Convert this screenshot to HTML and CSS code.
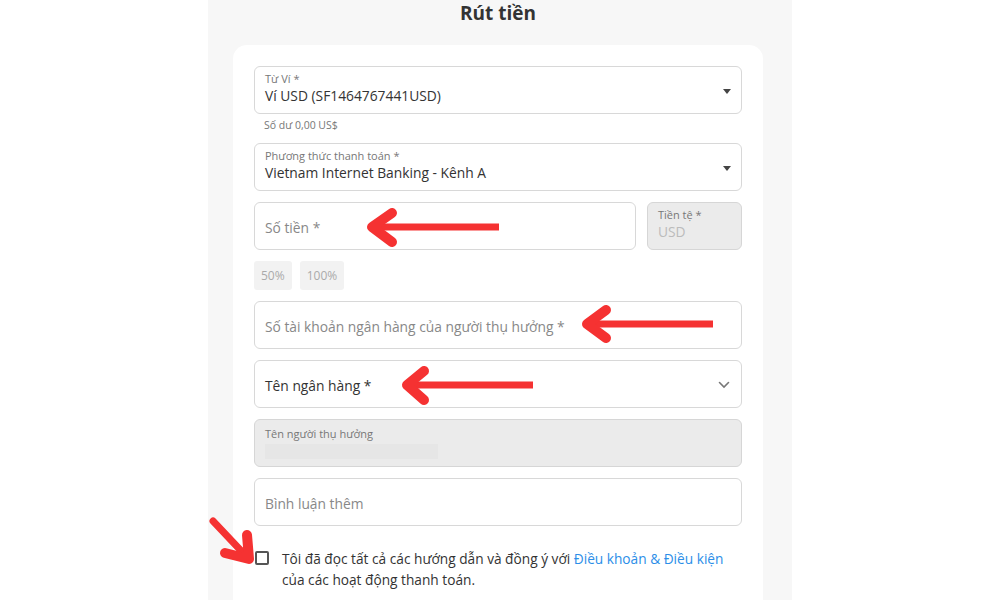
FILE: index.html
```html
<!DOCTYPE html>
<html lang="vi">
<head>
    <meta charset="UTF-8">
    <meta name="viewport" content="width=device-width, initial-scale=1.0">
    <title>Rút tiền</title>
    <link rel="stylesheet" href="styles.css">
</head>
<body>

    <div class="page">
        <h2 class="title">Rút tiền</h2>

        <div class="card">
            <div class="group">
                <div class="field select">
                    <span class="label">Từ Ví *</span>
                    <span class="value">Ví USD (SF1464767441USD)</span>
                    <span class="caret"></span>
                </div>
                <div class="helper">Số dư 0,00 US$</div>
            </div>

            <div class="field select">
                <span class="label">Phương thức thanh toán *</span>
                <span class="value">Vietnam Internet Banking - Kênh A</span>
                <span class="caret"></span>
            </div>

            <div class="row">
                <div class="field plain grow">
                    <span class="placeholder">Số tiền *</span>
                </div>
                <div class="field currency">
                    <span class="label">Tiền tệ *</span>
                    <span class="value muted">USD</span>
                </div>
            </div>

            <div class="chips">
                <span class="chip">50%</span>
                <span class="chip">100%</span>
            </div>

            <div class="field plain">
                <span class="placeholder">Số tài khoản ngân hàng của người thụ hưởng *</span>
            </div>

            <div class="field plain select">
                <span class="value">Tên ngân hàng *</span>
                <svg class="chevron" width="12" height="8" viewBox="0 0 12 8">
                    <path d="M1.5 1.5 L6 6 L10.5 1.5" fill="none" stroke="#777" stroke-width="1.6" stroke-linecap="round"/>
                </svg>
            </div>

            <div class="field disabled">
                <span class="label">Tên người thụ hưởng</span>
                <span class="skeleton"></span>
            </div>

            <div class="field plain">
                <span class="placeholder">Bình luận thêm</span>
            </div>

            <label class="agree">
                <span class="box"></span>
                <span>Tôi đã đọc tất cả các hướng dẫn và đồng ý với <a href="#">Điều khoản &amp; Điều kiện</a> của các hoạt động thanh toán.</span>
            </label>
        </div>
    </div>

    <!-- mũi tên chú thích -->
    <svg class="arrows" width="1000" height="600" viewBox="0 0 1000 600">
        <g fill="none" stroke="#f53232" stroke-linecap="round" stroke-linejoin="round">
            <line x1="374" y1="227" x2="499" y2="227" stroke-width="7" stroke-linecap="butt"/>
            <polyline points="392,213 372,227 392,242" stroke-width="10"/>

            <line x1="589" y1="324" x2="713" y2="324" stroke-width="7" stroke-linecap="butt"/>
            <polyline points="606,310 587,324 606,338" stroke-width="10"/>

            <line x1="409" y1="385" x2="533" y2="385" stroke-width="7" stroke-linecap="butt"/>
            <polyline points="424,371 407,385 424,400" stroke-width="10"/>

            <line x1="213" y1="521" x2="246" y2="556" stroke-width="7"/>
            <polyline points="225,553 249,559 247,535" stroke-width="10"/>
        </g>
    </svg>

</body>
</html>
```

FILE: styles.css
```css
body {
    margin: 0;
    background: #fff;
    font-family: "Open Sans", "Noto Sans", sans-serif;
    color: #333;
    position: relative;
    height: 600px;
    overflow: hidden;
}
.page {
    width: 584px;
    margin: 0 auto;
    background: #f7f7f7;
    min-height: 600px;
    padding: 0 29px 0 25px;
    box-sizing: border-box;
}
.title {
    margin: 0;
    font-size: 19px;
    line-height: 26px;
    font-weight: 700;
    text-align: center;
    color: #333;
}
.card {
    margin-top: 19px;
    background: #fff;
    border-radius: 14px;
    padding: 21px 21px 30px;
    display: flex;
    flex-direction: column;
    gap: 11px;
}
.field {
    position: relative;
    height: 48px;
    box-sizing: border-box;
    border: 1px solid #d8d8d8;
    border-radius: 6px;
    padding: 5px 10px 7px;
    display: flex;
    flex-direction: column;
    justify-content: center;
    background: #fff;
}
.field.plain {
    padding: 8px 10px 4px;
}
.label {
    font-size: 11px;
    line-height: 14px;
    color: #777;
}
.value {
    font-size: 13.8px;
    line-height: 20px;
    color: #333;
}
.value.muted {
    color: #bbb;
}
.placeholder {
    font-size: 13.8px;
    line-height: 20px;
    color: #888;
}
.caret {
    position: absolute;
    right: 10px;
    top: 22px;
    width: 0;
    height: 0;
    border-left: 4px solid transparent;
    border-right: 4px solid transparent;
    border-top: 5px solid #444;
}
.chevron {
    position: absolute;
    right: 11px;
    top: 20px;
}
.helper {
    padding: 4px 0 0 10px;
    font-size: 10.5px;
    line-height: 14px;
    color: #777;
}
.row {
    display: flex;
    gap: 11px;
}
.grow {
    flex: 1;
}
.currency {
    width: 95px;
    background: #ebebeb;
    border-color: #d6d6d6;
}
.chips {
    display: flex;
    gap: 8px;
}
.chip {
    background: #f2f2f2;
    color: #aaa;
    font-size: 12px;
    line-height: 29px;
    padding: 0 7px;
    border-radius: 3px;
}
.disabled {
    background: #ebebeb;
    border-color: #d6d6d6;
    justify-content: flex-start;
    padding-top: 7px;
}
.skeleton {
    display: block;
    width: 173px;
    height: 19px;
    margin-top: 3px;
    background: #e6e6e6;
}
.agree {
    margin-top: 11px;
    display: flex;
    gap: 13px;
    font-size: 13.7px;
    line-height: 21px;
    color: #333;
}
.box {
    flex: none;
    width: 14px;
    height: 14px;
    margin: 3px 0 0 1px;
    box-sizing: border-box;
    border: 2px solid #555;
    border-radius: 2px;
}
.agree a {
    color: #2b8ee8;
    text-decoration: none;
}
.arrows {
    position: absolute;
    top: 0;
    left: 0;
    pointer-events: none;
}
```
